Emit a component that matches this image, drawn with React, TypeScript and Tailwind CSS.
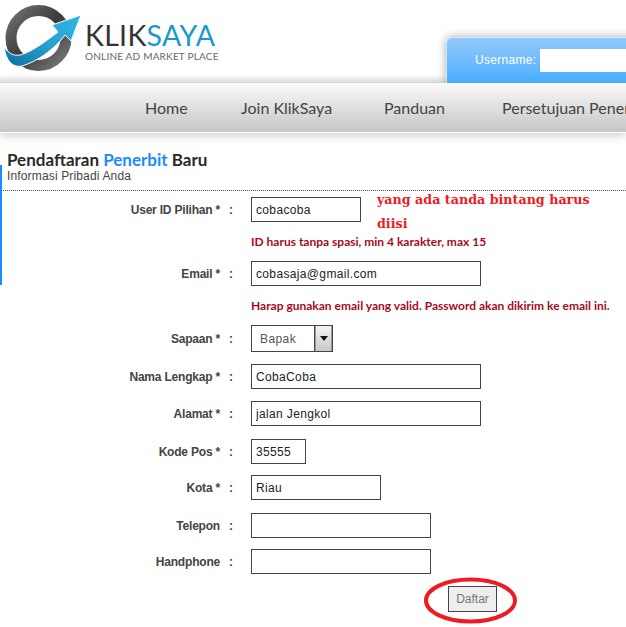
const NAV = [
  { label: "Home", width: "w-[43px]" },
  { label: "Join KlikSaya", width: "w-[90px]" },
  { label: "Panduan", width: "w-[65px]" },
  { label: "Persetujuan Penerbit", width: "" },
];

function Logo() {
  return (
    <svg width="82" height="72" viewBox="0 0 82 72" className="shrink-0">
      <defs>
        <linearGradient id="ring" x1="0" y1="0" x2="1" y2="1">
          <stop offset="0" stopColor="#707070" />
          <stop offset="0.5" stopColor="#3a3a3a" />
          <stop offset="1" stopColor="#7a7a7a" />
        </linearGradient>
        <linearGradient id="arrow" x1="0" y1="1" x2="1" y2="0">
          <stop offset="0" stopColor="#0a6f9f" />
          <stop offset="0.5" stopColor="#2b9fd2" />
          <stop offset="1" stopColor="#2fb6ea" />
        </linearGradient>
      </defs>
      <circle cx="38.5" cy="38" r="27.5" fill="none" stroke="url(#ring)" strokeWidth="11" />
      <path
        d="M4 47 C9 54 14 56 20 55 C32 52 46 41 58 32 L52 25 L81 15 L71 41 L65 35 C54 50 36 62 22 66 C12 68 6 60 4 47 Z"
        fill="url(#arrow)"
        stroke="#fff"
        strokeWidth="1"
      />
    </svg>
  );
}

function Row({ label, star = true, mt, children }: { label: string; star?: boolean; mt: string; children: React.ReactNode }) {
  return (
    <div className={`flex items-center ${mt}`}>
      <div className="w-[220px] shrink-0 text-right text-[12px] font-bold tracking-[-0.2px] text-[#444]">
        {label}
        {star ? <span> *</span> : null}
      </div>
      <div className="mr-[9px] w-[22px] shrink-0 text-center text-[12px] font-bold text-[#444]">:</div>
      {children}
    </div>
  );
}

function Field({ value, width }: { value: string; width: string }) {
  return (
    <input
      readOnly
      value={value}
      className={`h-[25px] ${width} border border-[#444] bg-white px-[4px] text-[12px] tracking-[0.35px] text-[#222] outline-none`}
    />
  );
}

function Hint({ text, mt }: { text: string; mt: string }) {
  return (
    <p className={`ml-[251px] ${mt} font-['Lato',sans-serif] text-[12px] leading-[14px] font-bold whitespace-nowrap text-[#a50a1e]`}>{text}</p>
  );
}

export default function App() {
  return (
    <div className="relative h-[627px] w-[626px] overflow-hidden bg-white font-['Liberation_Sans',Arial,sans-serif]">
      {/* header */}
      <div className="relative flex h-[83px] items-start overflow-hidden bg-gradient-to-b from-white from-[90%] to-[#d5d5d5]">
        <Logo />
        <div className="mt-[21px] ml-[3px]">
          <div className="font-['Lato',sans-serif] text-[28.5px] leading-[28px] tracking-[0.3px] whitespace-nowrap text-[#333]">
            KLIK<span className="text-[#1b9ac9]">SAYA</span>
          </div>
          <div className="mt-[1px] font-['Lato',sans-serif] text-[10px] leading-[12px] tracking-[0.2px] whitespace-nowrap text-[#666]">
            ONLINE AD MARKET PLACE
          </div>
        </div>
        <div className="absolute top-[37px] left-[446px] flex h-[46px] w-[200px] items-start rounded-tl-[6px] border-t border-l border-[#cfe6fb] bg-gradient-to-b from-[#93c9fb] to-[#45adfd] pt-[11px] pl-[28px] shadow-[0_0_10px_rgba(0,0,0,0.35)]">
          <span className="text-[12px] leading-[22px] tracking-[0.3px] text-white">Username:</span>
          <div className="ml-[4px] h-[23px] w-[120px] bg-white" />
        </div>
      </div>

      {/* nav */}
      <nav className="flex h-[50px] items-center gap-[53px] border-b border-white bg-gradient-to-b from-[#fafafa] to-[#c6c6c6] pl-[145px] font-['Lato',sans-serif] text-[16px] whitespace-nowrap text-[#444] shadow-[0_3px_8px_rgba(0,0,0,0.18)]">
        {NAV.map((item) => (
          <span key={item.label} className={`shrink-0 ${item.width}`}>
            {item.label}
          </span>
        ))}
      </nav>

      {/* title */}
      <div className="relative mt-[17px] px-[7px]">
        <h1 className="font-['Lato',sans-serif] text-[17px] leading-[19px] font-bold text-[#2a2a2a]">
          Pendaftaran <span className="text-[#1a8cff]">Penerbit</span> Baru
        </h1>
        <p className="text-[12px] leading-[15px] tracking-[0.15px] text-[#444]">Informasi Pribadi Anda</p>
      </div>
      <div className="mt-[6px] border-t border-dotted border-[#555]" />
      <div className="absolute top-[165px] left-0 h-[120px] w-[2px] bg-[#1a8cff]" />

      {/* form */}
      <form>
        <div className="relative">
          <Row label="User ID Pilihan" mt="mt-[6px]">
            <Field value="cobacoba" width="w-[110px]" />
          </Row>
          <div className="absolute top-[-9px] left-[377px] w-[240px] font-['DejaVu_Serif',serif] text-[12.7px] leading-[24px] font-bold text-[#ed1c24]">
            yang ada tanda bintang harus diisi
          </div>
        </div>
        <Hint text="ID harus tanpa spasi, min 4 karakter, max 15" mt="mt-[13px]" />
        <Row label="Email" mt="mt-[12px]">
          <Field value="cobasaja@gmail.com" width="w-[230px]" />
        </Row>
        <Hint text="Harap gunakan email yang valid. Password akan dikirim ke email ini." mt="mt-[13px]" />
        <Row label="Sapaan" mt="mt-[12px]">
          <div className="flex h-[27px] w-[82px] items-stretch border border-[#444] bg-white text-[12px] tracking-[0.4px] text-[#555]">
            <span className="flex-1 pt-[4px] pl-[8px]">Bapak</span>
            <span className="flex w-[17px] items-center justify-center border-x border-[#999] bg-gradient-to-b from-[#f4f4f4] to-[#c8c8c8] outline outline-1 outline-[#444]">
              <svg width="8" height="5" viewBox="0 0 8 5">
                <path d="M0 0 H8 L4 5 Z" fill="#111" />
              </svg>
            </span>
          </div>
        </Row>
        <Row label="Nama Lengkap" mt="mt-[12px]">
          <Field value="CobaCoba" width="w-[230px]" />
        </Row>
        <Row label="Alamat" mt="mt-[12px]">
          <Field value="jalan Jengkol" width="w-[230px]" />
        </Row>
        <Row label="Kode Pos" mt="mt-[13px]">
          <Field value="35555" width="w-[55px]" />
        </Row>
        <Row label="Kota" mt="mt-[11px]">
          <Field value="Riau" width="w-[130px]" />
        </Row>
        <Row label="Telepon" star={false} mt="mt-[13px]">
          <Field value="" width="w-[180px]" />
        </Row>
        <Row label="Handphone" star={false} mt="mt-[11px]">
          <Field value="" width="w-[180px]" />
        </Row>
        <div className="mt-[12px] ml-[448px]">
          <div className="relative h-[26px] w-[49px]">
            <button type="button" className="h-[26px] w-[49px] border border-[#444] bg-[#eee] text-[12px] text-[#777]">
              Daftar
            </button>
            <svg className="pointer-events-none absolute top-[-9px] left-[-25px]" width="96" height="48" viewBox="0 0 96 48">
              <ellipse cx="47.5" cy="23.5" rx="44.5" ry="21" fill="none" stroke="#ed1c24" strokeWidth="4" />
            </svg>
          </div>
        </div>
      </form>
    </div>
  );
}
